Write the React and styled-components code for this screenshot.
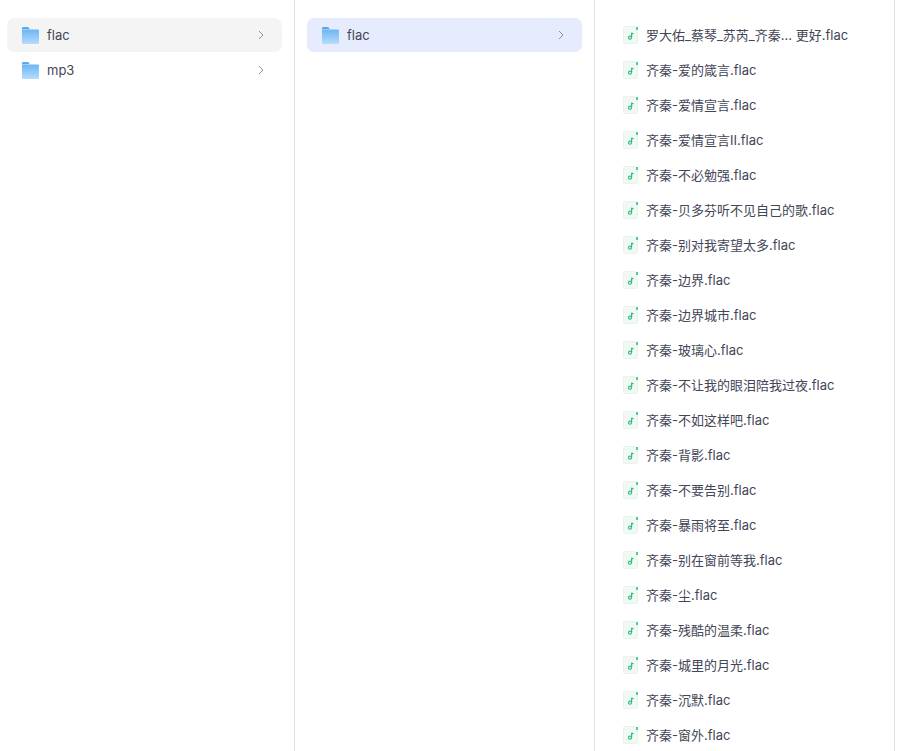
import React from 'react';
import styled, { createGlobalStyle } from 'styled-components';

const FILES = [
  '罗大佑_蔡琴_苏芮_齐秦... 更好.flac',
  '齐秦-爱的箴言.flac',
  '齐秦-爱情宣言.flac',
  '齐秦-爱情宣言II.flac',
  '齐秦-不必勉强.flac',
  '齐秦-贝多芬听不见自己的歌.flac',
  '齐秦-别对我寄望太多.flac',
  '齐秦-边界.flac',
  '齐秦-边界城市.flac',
  '齐秦-玻璃心.flac',
  '齐秦-不让我的眼泪陪我过夜.flac',
  '齐秦-不如这样吧.flac',
  '齐秦-背影.flac',
  '齐秦-不要告别.flac',
  '齐秦-暴雨将至.flac',
  '齐秦-别在窗前等我.flac',
  '齐秦-尘.flac',
  '齐秦-残酷的温柔.flac',
  '齐秦-城里的月光.flac',
  '齐秦-沉默.flac',
  '齐秦-窗外.flac',
];

const FolderIcon = () => (
  <svg width="17" height="17" viewBox="0 0 17 17">
    <defs>
      <linearGradient id="folderBody" x1="0" y1="0" x2="0" y2="1">
        <stop offset="0" stopColor="#6db5f2" />
        <stop offset="1" stopColor="#b5dcfd" />
      </linearGradient>
    </defs>
    <path d="M0 1.5C0 .7.5 0 1.3 0h4.2c.5 0 .9.2 1.2.6L8 2.2h-8z" fill="#5aa9ee" />
    <path d="M0 2.5h15.7c.7 0 1.3.6 1.3 1.3v11.9c0 .7-.6 1.3-1.3 1.3H1.3C.6 17 0 16.4 0 15.7z" fill="url(#folderBody)" />
  </svg>
);

const AudioIcon = () => (
  <svg width="15" height="18" viewBox="0 0 15 18">
    <path d="M.5 1.5c0-.6.4-1 1-1h10.5l2.5 3V16.5c0 .6-.4 1-1 1h-12c-.6 0-1-.4-1-1z" fill="#f1f9f5" stroke="#e8f3ed" />
    <rect x="13" y="1" width="2" height="3" fill="#4fd08f" />
    <path d="M8.6 6.8v4.7" stroke="#35bd7c" strokeWidth="1.2" fill="none" />
    <path d="M8.6 7c.5.5 1.1.7 1.9.7" stroke="#35bd7c" strokeWidth="1.2" fill="none" />
    <circle cx="7" cy="11.7" r="1.5" stroke="#35bd7c" strokeWidth="1.2" fill="none" />
  </svg>
);

const Chevron = () => (
  <svg width="6" height="10" viewBox="0 0 6 10">
    <path d="M1 1l4 4-4 4" stroke="#8f929c" strokeWidth="1" fill="none" />
  </svg>
);

const App = () => (
  <>
    <GlobalStyle />
    <Wrapper>
      <Column>
        <FolderRow state="hover">
          <FolderIcon />
          <Name>flac</Name>
          <Chevron />
        </FolderRow>
        <FolderRow>
          <FolderIcon />
          <Name>mp3</Name>
          <Chevron />
        </FolderRow>
      </Column>
      <Column>
        <FolderRow state="selected">
          <FolderIcon />
          <Name>flac</Name>
          <Chevron />
        </FolderRow>
      </Column>
      <Column>
        {FILES.map(file => (
          <FileRow key={file}>
            <AudioIcon />
            <Name>{file}</Name>
          </FileRow>
        ))}
      </Column>
    </Wrapper>
  </>
);

const GlobalStyle = createGlobalStyle`
  html, body {
    margin: 0;
    height: 100%;
    overflow: hidden;
    background: #fff;
  }
`;

const Wrapper = styled.div`
  display: flex;
  height: 751px;
  overflow: hidden;
  font-family: Inter, 'Noto Sans CJK SC', sans-serif;
  font-size: 13px;
  color: #434656;
`;

const Column = styled.div`
  flex: none;
  box-sizing: border-box;
  width: 300px;
  padding: 18px 12px 0 7px;
  border-right: 1px solid #e4e4e6;

  &:first-child {
    width: 295px;
  }

  &:nth-child(2) {
    padding-left: 12px;
  }
`;

const Row = styled.div`
  display: flex;
  align-items: center;
  height: 34px;
  margin-bottom: 1px;
  border-radius: 7px;
`;

const FolderRow = styled(Row)`
  padding: 0 18px 0 15px;
  background: ${props =>
    props.state === 'hover'
      ? '#f4f4f5'
      : props.state === 'selected'
      ? '#e6ebfd'
      : 'transparent'};
`;

const FileRow = styled(Row)`
  padding-left: 21px;
  white-space: nowrap;
`;

const Name = styled.span`
  flex: 1;
  margin-left: 8px;
  line-height: 18px;
`;

export default App;
